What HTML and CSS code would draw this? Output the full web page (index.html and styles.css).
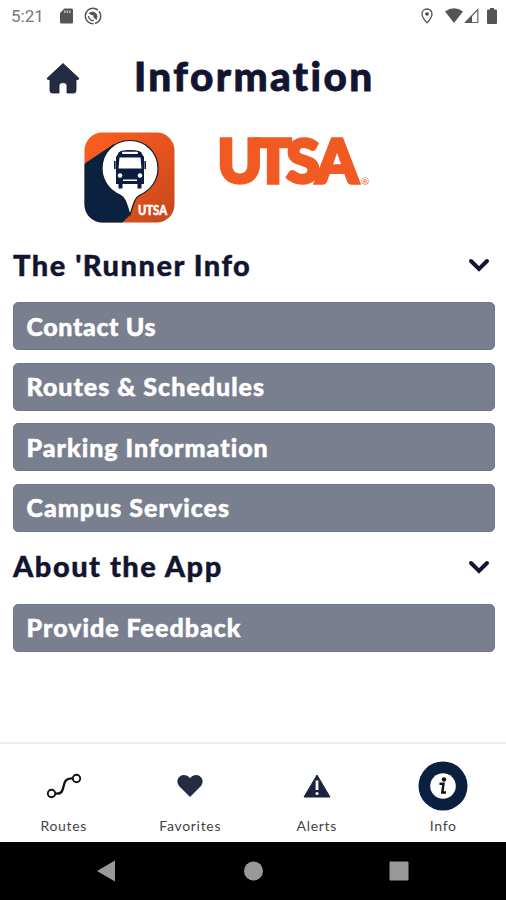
FILE: index.html
```html
<!DOCTYPE html>
<html lang="en">
<head>
    <meta charset="UTF-8">
    <meta name="viewport" content="width=device-width, initial-scale=1.0">
    <title>Information</title>
    <link rel="stylesheet" href="styles.css">
</head>
<body>
    <div class="status-bar">
        <span class="time">5:21</span>
        <svg class="sd-icon" width="13" height="16" viewBox="0 0 13 16">
            <path d="M4.5 0.5H11.5Q13 0.5 13 2V14Q13 15.5 11.5 15.5H1.5Q0 15.5 0 14V5Z" fill="#555"/>
            <path d="M4.8 2.5V5M7.3 2.5V5M9.8 2.5V5" stroke="#ccc" stroke-width="1.3"/>
        </svg>
        <svg class="sync-icon" width="18" height="18" viewBox="0 0 18 18">
            <circle cx="9" cy="9" r="7.7" fill="none" stroke="#555" stroke-width="1.5" stroke-dasharray="10 1.5 30 1.5"/>
            <path d="M4.5 6.5C7 3.5 13 4 13.5 9.5L12.5 13L9.5 10.5L9.5 8.5L7.5 8Z" fill="#555"/>
            <path d="M4.5 9A4.5 4.5 0 0 0 10 13.5" fill="none" stroke="#555" stroke-width="1.3"/>
        </svg>
        <span class="spacer"></span>
        <svg class="pin-icon" width="12" height="16" viewBox="0 0 12 16">
            <path d="M6 1C3 1 1 3.2 1 6C1 9.5 6 14.8 6 14.8S11 9.5 11 6C11 3.2 9 1 6 1Z" fill="none" stroke="#555" stroke-width="1.3"/>
            <circle cx="6" cy="6" r="1.8" fill="#444"/>
        </svg>
        <svg class="wifi-icon" width="18" height="15" viewBox="0 0 18 15">
            <path d="M0 3.5Q9 -3 18 3.5L9 15Z" fill="#555"/>
        </svg>
        <svg class="signal-icon" width="15" height="16" viewBox="0 0 15 16">
            <path d="M1.5 14.5L13.8 1.5V14.5Z" fill="none" stroke="#666" stroke-width="1.2"/>
            <path d="M0.5 15L8 7.5V15Z" fill="#555"/>
        </svg>
        <svg class="battery-icon" width="10" height="16" viewBox="0 0 10 16">
            <path d="M3 0H7V1.5H9Q10 1.5 10 2.5V15Q10 16 9 16H1Q0 16 0 15V2.5Q0 1.5 1 1.5H3Z" fill="#555"/>
        </svg>
    </div>

    <div class="header">
        <svg class="home-icon" width="34" height="32" viewBox="0 0 34 32">
            <path d="M17 1.5L1.2 16.2Q1 17.5 2.2 17.5H4V28.5Q4 31 6.5 31H13V23.5Q13 20.5 17 20.5T21 23.5V31H27.5Q30 31 30 28.5V17.5H31.8Q33 17.5 32.8 16.2Z" fill="#252c42" stroke="#111632" stroke-width="0.8"/>
        </svg>
        <h1>Information</h1>
    </div>

    <div class="logos">
        <svg class="app-logo" width="91" height="91" viewBox="0 0 91 91">
            <defs>
                <linearGradient id="orange" x1="0" y1="0" x2="1" y2="1">
                    <stop offset="0" stop-color="#f8601f"/>
                    <stop offset="0.5" stop-color="#e9541d"/>
                    <stop offset="1" stop-color="#c1461b"/>
                </linearGradient>
                <clipPath id="tile"><rect x="0.5" y="0.5" width="90" height="90" rx="18"/></clipPath>
            </defs>
            <g clip-path="url(#tile)">
                <rect width="91" height="91" fill="url(#orange)"/>
                <path d="M0 32L30 12L46 83L38 91H0Z" fill="#0b2140"/>
            </g>
            <path d="M46 8.5C30 8.5 18 20.5 18 36.5C18 49 26 58.5 36 63C42 66 43 74 46 83C49 74 50 66 56 63C66 58.5 74 49 74 36.5C74 20.5 62 8.5 46 8.5Z" fill="#fff" stroke="#111a2e" stroke-width="1.2"/>
            <path d="M34 22Q34 18 46 18T58 22L60 25V52H57.5V56.5H53.5V52H38.5V56.5H34.5V52H32V25Z" fill="#0b1c42"/>
            <rect x="38" y="19.8" width="16" height="2.2" rx="1" fill="#fff"/>
            <path d="M35.5 25.5H56.5L57.5 36.5H34.5Z" fill="#fff"/>
            <circle cx="36" cy="43.5" r="2.3" fill="#fff"/>
            <circle cx="56" cy="43.5" r="2.3" fill="#fff"/>
            <rect x="39" y="47.5" width="14" height="1.5" fill="#fff"/>
            <path d="M30.8 29V37M61.2 29V37" stroke="#0b1c42" stroke-width="1.6"/>
            <text class="app-logo-text" x="54" y="83" textLength="29" lengthAdjust="spacingAndGlyphs">UTSA</text>
        </svg>
        <svg class="utsa-logo" width="170" height="84" viewBox="0 0 170 84">
            <text class="utsa-text" y="62.5" x="8.5 46 77.5 107">UTSA</text>
            <text class="reg-mark" x="152" y="65">®</text>
        </svg>
    </div>

    <div class="section-title">
        <h2>The 'Runner Info</h2>
        <svg class="chevron" width="22" height="16" viewBox="0 0 22 16">
            <path d="M3 4L11 12L19 4" fill="none" stroke="#12152f" stroke-width="4" stroke-linecap="round"/>
        </svg>
    </div>
    <div class="menu">
        <button class="menu-button contact">Contact Us</button>
        <button class="menu-button">Routes &amp; Schedules</button>
        <button class="menu-button">Parking Information</button>
        <button class="menu-button">Campus Services</button>
    </div>

    <div class="section-title">
        <h2>About the App</h2>
        <svg class="chevron" width="22" height="16" viewBox="0 0 22 16">
            <path d="M3 4L11 12L19 4" fill="none" stroke="#12152f" stroke-width="4" stroke-linecap="round"/>
        </svg>
    </div>
    <div class="menu">
        <button class="menu-button">Provide Feedback</button>
    </div>

    <div class="tab-bar">
        <div class="tab">
            <div class="tab-icon">
                <svg width="36" height="28" viewBox="0 0 36 28">
                    <path d="M9 21.5C23 23.5 12 5 27 6.5" fill="none" stroke="#111" stroke-width="2.4"/>
                    <circle cx="5.5" cy="21.5" r="3.7" fill="#fff" stroke="#111" stroke-width="1.9"/>
                    <circle cx="30.5" cy="6.5" r="3.7" fill="#fff" stroke="#111" stroke-width="1.9"/>
                </svg>
            </div>
            <span>Routes</span>
        </div>
        <div class="tab">
            <div class="tab-icon">
                <svg width="26" height="24" viewBox="0 0 26 24">
                    <path d="M13 22.5L2.5 12Q0.5 9.5 0.9 6.5C1.5 1 9 -0.5 13 4.5C17 -0.5 24.5 1 25.1 6.5Q25.5 9.5 23.5 12Z" fill="#252c42" stroke="#111632" stroke-width="0.8"/>
                </svg>
            </div>
            <span>Favorites</span>
        </div>
        <div class="tab">
            <div class="tab-icon">
                <svg width="28" height="26" viewBox="0 0 28 26">
                    <path d="M14 2L27 24H1Z" fill="#1c2340" stroke="#1c2340" stroke-linejoin="round"/>
                    <path d="M14 7.5V17" stroke="#fff" stroke-width="2.8"/>
                    <circle cx="14" cy="20.5" r="1.6" fill="#fff"/>
                </svg>
            </div>
            <span>Alerts</span>
        </div>
        <div class="tab">
            <div class="tab-icon">
                <svg width="50" height="50" viewBox="0 0 50 50">
                    <circle cx="25" cy="25" r="24.5" fill="#0b1f40"/>
                    <circle cx="25" cy="25" r="12.8" fill="#fff"/>
                    <circle cx="26" cy="18.5" r="2.2" fill="#111"/>
                    <path d="M21.5 22.8H25.5L24.3 31.5H28" fill="none" stroke="#111" stroke-width="2.4"/>
                </svg>
            </div>
            <span>Info</span>
        </div>
    </div>

    <div class="nav-bar">
        <svg width="506" height="58" viewBox="0 0 506 58">
            <path d="M97 29L115 18.5V39.5Z" fill="#999"/>
            <circle cx="253.5" cy="29" r="9.5" fill="#999"/>
            <rect x="389.5" y="19.5" width="19" height="19" rx="1" fill="#999"/>
        </svg>
    </div>
</body>
</html>
```
FILE: styles.css
```css
* {
    box-sizing: border-box;
}
body {
    margin: 0;
    height: 900px;
    display: flex;
    flex-direction: column;
    background-color: #fff;
    font-family: Lato, sans-serif;
    color: #12152f;
    overflow: hidden;
}
svg {
    display: block;
    flex-shrink: 0;
}
h1, h2 {
    margin: 0;
    font-weight: 900;
    white-space: nowrap;
    -webkit-text-stroke: 0.4px #12152f;
}
.status-bar {
    display: flex;
    align-items: center;
    height: 31px;
    padding: 0 9px 0 11px;
}
.time {
    width: 49px;
    font-family: Roboto, sans-serif;
    font-size: 17px;
    color: #777;
}
.sync-icon {
    margin-left: 11px;
}
.spacer {
    flex: 1;
}
.wifi-icon {
    margin: 0 1px 0 12px;
}
.battery-icon {
    margin-left: 8px;
}
.header {
    display: flex;
    align-items: center;
    height: 94px;
    padding: 0 0 0 46px;
}
h1 {
    margin: -5px 0 0 54px;
    font-size: 40.5px;
    line-height: 48px;
    letter-spacing: 2.4px;
    -webkit-text-stroke-width: 0.8px;
}
.logos {
    display: flex;
    height: 109px;
    padding: 7px 0 0 84px;
}
.utsa-logo {
    margin: -12px 0 0 34px;
}
.utsa-text {
    font-size: 60px;
    font-weight: 900;
    fill: #f15a22;
    stroke: #f15a22;
    stroke-width: 3.5px;
}
.reg-mark {
    font-size: 10px;
    fill: #f15a22;
}
.app-logo-text {
    font-size: 13px;
    font-weight: 900;
    fill: #fff;
    stroke: #fff;
    stroke-width: 0.5px;
}
.section-title {
    display: flex;
    align-items: center;
    justify-content: space-between;
    height: 62px;
    padding: 0 16px 0 13px;
}
h2 {
    margin-top: -1px;
    font-size: 29px;
    line-height: 36px;
    letter-spacing: 1.5px;
}
.section-title + .menu {
    margin-top: 6px;
}
.menu {
    display: flex;
    flex-direction: column;
    gap: 12.5px;
    padding: 0 11.5px 0 12.5px;
}
.menu + .section-title {
    margin-top: 4px;
}
.menu-button {
    height: 48px;
    padding: 0 0 1px 13px;
    border: 1px solid #70778a;
    border-radius: 5px;
    background-color: #797f8e;
    color: #fff;
    font-family: Lato, sans-serif;
    font-size: 25px;
    font-weight: 900;
    letter-spacing: 1px;
    text-align: left;
    white-space: nowrap;
    -webkit-text-stroke: 0.5px #fff;
}
.contact {
    letter-spacing: 0.6px;
}
.tab-bar {
    display: flex;
    height: 100px;
    margin-top: auto;
    border-top: 2px solid #eee;
}
.tab {
    flex: 1;
    display: flex;
    flex-direction: column;
    align-items: center;
    padding: 17px 0 0 1px;
    font-size: 14px;
    line-height: 18px;
    color: #444;
    letter-spacing: 0.7px;
}
.tab-icon {
    display: flex;
    align-items: center;
    justify-content: center;
    height: 50px;
    margin-bottom: 6px;
}
.nav-bar {
    height: 58px;
    background-color: #000;
}
```
